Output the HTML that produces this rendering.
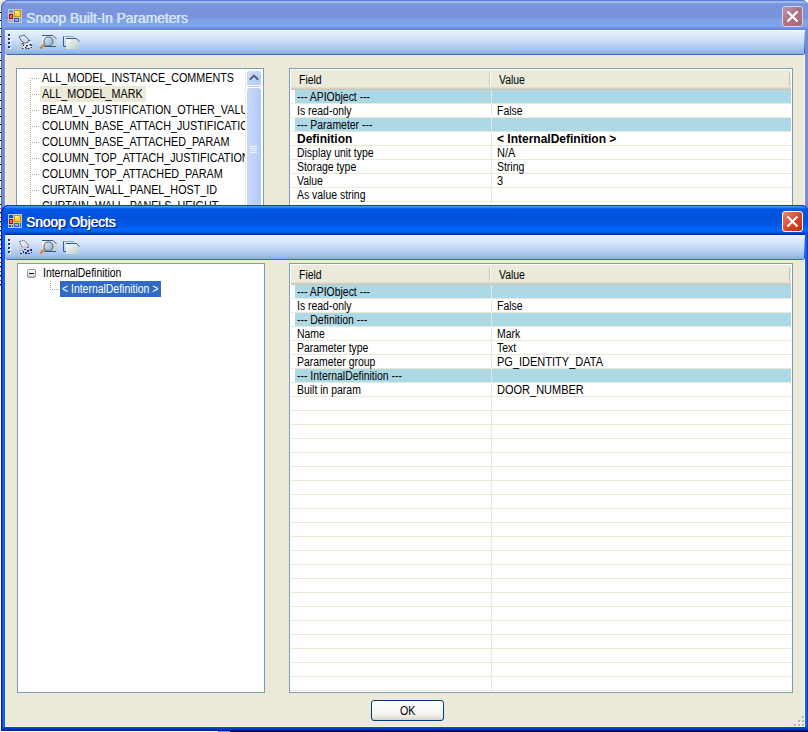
<!DOCTYPE html>
<html><head><meta charset="utf-8">
<style>
html,body{margin:0;padding:0;}
body{width:808px;height:732px;position:relative;overflow:hidden;background:#fff;font-family:"Liberation Sans",sans-serif;font-size:11px;color:#000;}
.a{position:absolute;}
.win{position:absolute;overflow:hidden;}
.client{position:absolute;background:#ece9d8;}
.tb{position:absolute;border-radius:0 0 3px 3px;}
.panel{position:absolute;background:#fff;border:1px solid #7f9db9;box-sizing:border-box;overflow:hidden;}
.hdr{position:absolute;left:1px;top:1px;height:20px;background:#ebeadb;}
.hdr .sh1{position:absolute;left:0;right:0;bottom:2px;height:1px;background:#e2dece;}
.hdr .sh2{position:absolute;left:0;right:0;bottom:1px;height:1px;background:#d6d2c2;}
.hdr .sh3{position:absolute;left:0;right:0;bottom:0;height:1px;background:#cbc7b8;}
.t{position:absolute;white-space:pre;line-height:13px;}
.row{position:absolute;height:13px;background:#add8e6;}
.gl{position:absolute;height:1px;background:#ebe8d8;}
.tree .t{line-height:16px;font-size:12px;transform:scaleX(0.898);transform-origin:0 0;margin-top:1px;}
.dotv{position:absolute;width:1px;background:repeating-linear-gradient(to bottom,#aca899 0 1px,transparent 1px 2px);}
.doth{position:absolute;height:1px;background:repeating-linear-gradient(to right,#aca899 0 1px,transparent 1px 2px);}
</style></head><body>

<!-- background strip at far left -->
<div class="a" style="left:0;top:0;width:1px;height:732px;background:#fff"></div>
<div class="a" style="left:0;top:0;width:8px;height:8px;background:#ece9d8"></div>
<div class="a" style="left:0;top:8px;width:1px;height:200px;background:repeating-linear-gradient(to bottom,transparent 0 4px,#000 4px 5px,transparent 5px 8px)"></div>
<div class="a" style="left:0;top:208px;width:1px;height:80px;background:repeating-linear-gradient(to bottom,#c04020 0 1px,transparent 1px 4px,#000 4px 5px,#40c0e0 5px 6px,transparent 6px 9px)"></div>

<!-- ============ BACK WINDOW (inactive) ============ -->
<div class="win" style="left:1px;top:0;width:808px;height:210px;background:#7a94dc;border-radius:8px 8px 0 0;">
  <!-- title gradient -->
  <div class="a" style="left:0;top:0;width:808px;height:30px;background:linear-gradient(to bottom,#5a7edc 0,#5a7edc 1px,#a0b8e8 1px,#a0b8e8 3px,#7a9ce4 3px,#7a94dc 5px,#7a94dc 18px,#7ca4e6 20px,#7ca4e6 27px,#6a88da 28px,#6a88da 30px);"></div>
  <!-- left/right frames -->
  <div class="a" style="left:0;top:28px;width:4px;height:190px;background:linear-gradient(to right,#5a6ed8 0 1px,#6f86dc 1px,#7890e0 4px);"></div>
  <div class="a" style="left:804px;top:28px;width:4px;height:190px;background:linear-gradient(to right,#7890e0 0,#6f86dc 3px,#5a6ed8 3px);"></div>
</div>
<div class="a" style="left:1px;top:0;width:808px;height:220px;border-left:1px solid #5468d4;border-top:1px solid #5a7edc;border-radius:8px 8px 0 0;box-sizing:border-box"></div>
<!-- back client -->
<div class="client" style="left:5px;top:30px;width:800px;height:180px;border-left:1px solid #fcf6e0;border-right:1px solid #fcf6e0;box-sizing:border-box"></div>
<!-- back toolbar -->
<div class="tb" style="left:5px;top:30px;width:800px;height:25px;background:linear-gradient(to bottom,#f0f7fe 0,#e3eefc 8%,#d6e6fb 30%,#c0d6f6 55%,#a4c2ee 80%,#8cb0e6 94%,#3d6bb8 96%);"></div>
<div class="a" style="left:804px;top:32px;width:1px;height:22px;border-radius:0 0 2px 0;background:linear-gradient(to bottom,#c0d8f8,#6a98e0 50%,#1c48a0)"></div>
<div class="a" style="left:804px;top:30px;width:1px;height:2px;background:#f4ecd0"></div>
<svg class="a" style="left:5px;top:30px" width="80" height="25">
<defs><linearGradient id="pgb" x1="0" y1="0" x2="1" y2="1"><stop offset="0" stop-color="#ffffff"/><stop offset="1" stop-color="#b4ccc8"/></linearGradient>
<linearGradient id="lnb" x1="0" y1="0" x2="1" y2="1"><stop offset="0" stop-color="#e4f2fc"/><stop offset="1" stop-color="#7aa8dc"/></linearGradient>
<linearGradient id="ppb" x1="0" y1="0" x2="1" y2="1"><stop offset="0" stop-color="#ffffff"/><stop offset="1" stop-color="#c8c8d0"/></linearGradient></defs>
<g fill="#fff"><rect x="4" y="5" width="2" height="2"/><rect x="4" y="9" width="2" height="2"/><rect x="4" y="13" width="2" height="2"/><rect x="4" y="17" width="2" height="2"/></g>
<g fill="#193a78"><rect x="3" y="4" width="2" height="2"/><rect x="3" y="8" width="2" height="2"/><rect x="3" y="12" width="2" height="2"/><rect x="3" y="16" width="2" height="2"/></g>
<!-- printer -->
<path d="M15 13 L18 12 L27 12 L27.5 19 L15 19 Z" fill="#e4eaf4"/>
<rect x="15" y="13" width="3" height="6" fill="#bccacc"/>
<path d="M14 6.5 L19 5 L23.5 9.2 L23 12.5 L19.5 13 L16.5 11 Z" fill="url(#pp{id})" stroke="#5a5a68" stroke-width="0.9"/>
<rect x="23" y="10" width="2.5" height="1" fill="#4a70c0"/>
<g fill="#14205e"><rect x="17" y="13" width="1.5" height="1.2"/><rect x="18" y="14.5" width="1.2" height="1.5"/><rect x="21" y="15" width="1.8" height="1.5"/><rect x="24.5" y="14" width="1.5" height="1.5"/><rect x="26" y="14.5" width="1.2" height="1.5"/><rect x="20" y="17" width="1.5" height="1.5"/><rect x="23" y="18" width="1.5" height="1"/><rect x="25.5" y="17" width="1.3" height="1.2"/><rect x="17" y="18" width="1.5" height="1"/><rect x="21" y="18.3" width="1.5" height="0.8"/></g>
<!-- magnifier page -->
<path d="M37 5 L48 5 L51.5 8.5 L51.5 17 L37 17 Z" fill="url(#pgb)"/>
<path d="M37 5.5 L48 5.5 L51.5 9 M39 16.5 L51 16.5" stroke="#2a5aa0" stroke-width="1" fill="none"/>
<path d="M39 14.5 L35.8 18" stroke="#d08430" stroke-width="2" stroke-linecap="round"/>
<circle cx="43.5" cy="11.5" r="4.5" fill="url(#lnb)" stroke="#6a6458" stroke-width="1.1"/>
<!-- copy -->
<path d="M58.5 6 L58.5 16.5 L61 16.5" stroke="#2a5aa0" stroke-width="1" fill="none"/>
<path d="M58.5 6.5 L69 6.5" stroke="#8aa8d0" stroke-width="1" fill="none"/>
<path d="M61 8 L71.5 8 L74 10.5 L74 19 L61 19 Z" fill="url(#pgb)"/>
<path d="M61 8.5 L71.5 8.5 L74.5 11.5" stroke="#2a5aa0" stroke-width="1" fill="none"/>
</svg>
<!-- back title icon -->
<svg class="a" style="left:8px;top:9px" width="14" height="14"><g fill="#c9c7bd"><rect x="0" y="0" width="14" height="1"/><rect x="0" y="13" width="14" height="1"/><rect x="0" y="0" width="1" height="14"/><rect x="13" y="0" width="1" height="14"/><rect x="5" y="0" width="1" height="14"/><rect x="1" y="4" width="4" height="1"/><rect x="1" y="10" width="4" height="1"/><rect x="6" y="8" width="7" height="1"/><rect x="11" y="9" width="1" height="4"/><rect x="3" y="10" width="1" height="3"/></g>
<rect x="6" y="1" width="7" height="7" fill="#c89400"/><rect x="7" y="2" width="5" height="5" fill="#ffd23c"/><rect x="7" y="2" width="3" height="2" fill="#fff0a8"/>
<rect x="1" y="5" width="4" height="5" fill="#a00c0c"/><rect x="2" y="6" width="2" height="3" fill="#f07070"/>
<rect x="6" y="9" width="5" height="4" fill="#2a5cc8"/><rect x="7" y="10" width="3" height="2" fill="#8cb4ff"/></svg>
<div class="t" style="left:26px;top:10px;font-size:14.5px;color:#d8e4f8;line-height:16px;transform:scaleX(0.95);transform-origin:0 0;text-shadow:0.6px 0 0 #d8e4f8">Snoop Built-In Parameters</div>
<!-- back close btn -->
<div class="a" style="left:782px;top:6px;width:21px;height:21px;border:1px solid #d0d8f0;border-radius:3px;box-sizing:border-box;background:linear-gradient(135deg,#bc96b0,#b07482 45%,#aa6672);"></div>
<svg class="a" style="left:782px;top:6px" width="21" height="21"><path d="M5.5 5.5 L15.5 15.5 M15.5 5.5 L5.5 15.5" stroke="#fff" stroke-width="2.2"/></svg>

<!-- back tree panel -->
<div class="panel tree" style="left:16px;top:68px;width:248px;height:160px;">
  <div class="dotv" style="left:13px;top:9px;height:150px"></div>
  <div class="doth" style="left:13px;top:9px;width:9px"></div>
  <div class="doth" style="left:13px;top:25px;width:9px"></div>
  <div class="doth" style="left:13px;top:41px;width:9px"></div>
  <div class="doth" style="left:13px;top:57px;width:9px"></div>
  <div class="doth" style="left:13px;top:73px;width:9px"></div>
  <div class="doth" style="left:13px;top:89px;width:9px"></div>
  <div class="doth" style="left:13px;top:105px;width:9px"></div>
  <div class="doth" style="left:13px;top:121px;width:9px"></div>
  <div class="doth" style="left:13px;top:137px;width:9px"></div>
  <div class="a" style="left:23px;top:17px;width:106px;height:16px;background:#ece9d8"></div>
  <div class="t" style="left:25px;top:0px">ALL_MODEL_INSTANCE_COMMENTS</div>
  <div class="t" style="left:25px;top:16px">ALL_MODEL_MARK</div>
  <div class="t" style="left:25px;top:32px">BEAM_V_JUSTIFICATION_OTHER_VALUE</div>
  <div class="t" style="left:25px;top:48px">COLUMN_BASE_ATTACH_JUSTIFICATION</div>
  <div class="t" style="left:25px;top:64px">COLUMN_BASE_ATTACHED_PARAM</div>
  <div class="t" style="left:25px;top:80px">COLUMN_TOP_ATTACH_JUSTIFICATION</div>
  <div class="t" style="left:25px;top:96px">COLUMN_TOP_ATTACHED_PARAM</div>
  <div class="t" style="left:25px;top:112px">CURTAIN_WALL_PANEL_HOST_ID</div>
  <div class="t" style="left:25px;top:128px">CURTAIN_WALL_PANELS_HEIGHT</div>
  <!-- scrollbar -->
  <div class="a" style="left:228px;top:0;width:17px;height:160px;background:#fdfdfa;border-left:1px solid #eeede5;box-sizing:border-box"></div>
  <div class="a" style="left:230px;top:2px;width:14px;height:14px;border-radius:3px;background:linear-gradient(135deg,#d0defd,#b6cbf8);box-shadow:0 0 0 1px #fff,0 1px 0 1px #b9c9e6"></div>
  <svg class="a" style="left:230px;top:2px" width="14" height="14"><path d="M2.8 8.8 L7 4.6 L11.2 8.8" stroke="#4d6185" stroke-width="2" fill="none"/></svg>
  <div class="a" style="left:230px;top:19px;width:14px;height:150px;border-radius:3px;background:linear-gradient(to right,#c9d9fc,#bcd1fb 60%,#b2c8f7);box-shadow:0 0 0 1px #fff"></div>
  <div class="a" style="left:233px;top:77px;width:7px;height:1px;background:#eef3fe;box-shadow:0 2px 0 #eef3fe,0 4px 0 #eef3fe,0 6px 0 #eef3fe"></div>
</div>

<!-- back list panel -->
<div class="panel" style="left:289px;top:68px;width:504px;height:160px;">
  <div class="hdr" style="width:500px"><div class="sh1"></div><div class="sh2"></div><div class="sh3"></div>
    <div class="a" style="left:198px;top:3px;width:1px;height:13px;background:#c7c5b2;border-right:1px solid #fff"></div>
    <div class="a" style="left:498px;top:3px;width:1px;height:13px;background:#c7c5b2;"></div>
  </div>
  <div class="t" style="left:9px;top:4px;font-size:12px;transform:scaleX(0.87);transform-origin:0 0;margin-top:1px">Field</div>
  <div class="t" style="left:209px;top:4px;font-size:12px;transform:scaleX(0.87);transform-origin:0 0;margin-top:1px">Value</div>
  <div class="gl" style="left:1px;top:34px;width:500px"></div>
<div class="gl" style="left:1px;top:48px;width:500px"></div>
<div class="gl" style="left:1px;top:62px;width:500px"></div>
<div class="gl" style="left:1px;top:76px;width:500px"></div>
<div class="gl" style="left:1px;top:90px;width:500px"></div>
<div class="gl" style="left:1px;top:104px;width:500px"></div>
<div class="gl" style="left:1px;top:118px;width:500px"></div>
<div class="gl" style="left:1px;top:132px;width:500px"></div>
<div class="gl" style="left:1px;top:146px;width:500px"></div>
<div class="a" style="left:201px;top:21px;width:1px;height:137px;background:#ebe8d8"></div>
<div class="row" style="left:5px;top:21px;width:196px"></div>
<div class="row" style="left:202px;top:21px;width:299px"></div>
<div class="t" style="left:7px;top:21px;font-size:12px;transform:scaleX(0.87);transform-origin:0 0;margin-top:1px;">--- APIObject ---</div>
<div class="t" style="left:7px;top:35px;font-size:12px;transform:scaleX(0.87);transform-origin:0 0;margin-top:1px;">Is read-only</div>
<div class="t" style="left:207px;top:35px;font-size:12px;transform:scaleX(0.87);transform-origin:0 0;margin-top:1px;">False</div>
<div class="row" style="left:5px;top:49px;width:196px"></div>
<div class="row" style="left:202px;top:49px;width:299px"></div>
<div class="t" style="left:7px;top:49px;font-size:12px;transform:scaleX(0.87);transform-origin:0 0;margin-top:1px;">--- Parameter ---</div>
<div class="t" style="left:7px;top:63px;font-weight:bold;font-size:12px;margin-top:1px;">Definition</div>
<div class="t" style="left:207px;top:63px;font-weight:bold;font-size:12px;margin-top:1px;">&lt; InternalDefinition &gt;</div>
<div class="t" style="left:7px;top:77px;font-size:12px;transform:scaleX(0.87);transform-origin:0 0;margin-top:1px;">Display unit type</div>
<div class="t" style="left:207px;top:77px;font-size:12px;transform:scaleX(0.917);transform-origin:0 0;margin-top:1px;">N/A</div>
<div class="t" style="left:7px;top:91px;font-size:12px;transform:scaleX(0.87);transform-origin:0 0;margin-top:1px;">Storage type</div>
<div class="t" style="left:207px;top:91px;font-size:12px;transform:scaleX(0.87);transform-origin:0 0;margin-top:1px;">String</div>
<div class="t" style="left:7px;top:105px;font-size:12px;transform:scaleX(0.87);transform-origin:0 0;margin-top:1px;">Value</div>
<div class="t" style="left:207px;top:105px;font-size:12px;transform:scaleX(0.917);transform-origin:0 0;margin-top:1px;">3</div>
<div class="t" style="left:7px;top:119px;font-size:12px;transform:scaleX(0.87);transform-origin:0 0;margin-top:1px;">As value string</div>
</div>

<!-- ============ FRONT WINDOW (active) ============ -->
<div class="win" style="left:1px;top:205px;width:808px;height:526px;background:#0831d9;border-radius:8px 8px 0 0;">
  <div class="a" style="left:0;top:0;width:808px;height:30px;background:linear-gradient(to bottom,#0a40d0 0 1px,#3a92ff 1px 2px,#2a82f8 2px 3px,#0a62f0 3px 4px,#0056e4 4px,#0050da 12px,#0054e0 17px,#005ae8 21px,#0066fe 23px,#0066fe 26px,#005ff4 26px 27px,#0050e0 27px 28px,#0040c8 28px 29px,#0030b0 29px 30px);"></div>
  <div class="a" style="left:0;top:28px;width:4px;height:498px;background:linear-gradient(to right,#0010c8 0,#0030e0 1px,#1868f8 2px,#0a5ae8 4px);"></div>
  <div class="a" style="left:804px;top:28px;width:4px;height:498px;background:linear-gradient(to right,#0a5ae8 0,#1868f8 1px,#0030e0 3px,#0010c8 4px);"></div>
  <div class="a" style="left:0;top:522px;width:808px;height:4px;background:linear-gradient(to bottom,#0048e8 0,#0038d0 2px,#001890 4px);"></div>
</div>
<div class="a" style="left:1px;top:205px;width:808px;height:526px;border-left:1px solid #0018c0;border-top:1px solid #0840d8;border-radius:8px 8px 0 0;box-sizing:border-box"></div>
<div class="client" style="left:5px;top:235px;width:800px;height:492px;border-left:1px solid #fcf6e0;border-right:1px solid #fcf6e0;border-bottom:1px solid #fcf6e0;box-sizing:border-box"></div>
<div class="tb" style="left:5px;top:235px;width:800px;height:25px;background:linear-gradient(to bottom,#f0f7fe 0,#e3eefc 8%,#d6e6fb 30%,#c0d6f6 55%,#a4c2ee 80%,#8cb0e6 94%,#3d6bb8 96%);"></div>
<div class="a" style="left:804px;top:237px;width:1px;height:22px;border-radius:0 0 2px 0;background:linear-gradient(to bottom,#c0d8f8,#6a98e0 50%,#1c48a0)"></div>
<div class="a" style="left:804px;top:235px;width:1px;height:2px;background:#f4ecd0"></div>
<svg class="a" style="left:5px;top:235px" width="80" height="25">
<defs><linearGradient id="pgf" x1="0" y1="0" x2="1" y2="1"><stop offset="0" stop-color="#ffffff"/><stop offset="1" stop-color="#b4ccc8"/></linearGradient>
<linearGradient id="lnf" x1="0" y1="0" x2="1" y2="1"><stop offset="0" stop-color="#e4f2fc"/><stop offset="1" stop-color="#7aa8dc"/></linearGradient>
<linearGradient id="ppf" x1="0" y1="0" x2="1" y2="1"><stop offset="0" stop-color="#ffffff"/><stop offset="1" stop-color="#c8c8d0"/></linearGradient></defs>
<g fill="#fff"><rect x="4" y="5" width="2" height="2"/><rect x="4" y="9" width="2" height="2"/><rect x="4" y="13" width="2" height="2"/><rect x="4" y="17" width="2" height="2"/></g>
<g fill="#193a78"><rect x="3" y="4" width="2" height="2"/><rect x="3" y="8" width="2" height="2"/><rect x="3" y="12" width="2" height="2"/><rect x="3" y="16" width="2" height="2"/></g>
<!-- printer -->
<path d="M14.5 6.5 L19 5.5 L23.5 9.5 L22.5 12.5 L17.5 13 Z" fill="url(#ppf)" stroke="#4a4a58" stroke-width="1" stroke-dasharray="1.5 1"/>
<path d="M15 13 L20 12 L27 14 L27 18 L15 18 Z" fill="#c8d0e0"/>
<path d="M15 13.5 L15 18.5" stroke="#b8c4c8" stroke-width="2"/>
<g fill="#1a2a70"><rect x="19" y="14" width="2" height="1"/><rect x="22" y="15" width="2" height="2"/><rect x="25" y="14" width="2" height="2"/><rect x="20" y="17" width="2" height="2"/><rect x="23" y="18" width="2" height="1"/><rect x="26" y="17" width="1" height="1"/><rect x="18" y="16" width="1" height="2"/><rect x="15" y="18" width="2" height="1"/></g>
<g fill="#5070c0"><rect x="17" y="15" width="1" height="1"/><rect x="22" y="12" width="2" height="1"/></g>
<!-- magnifier page -->
<path d="M37 5 L48 5 L51.5 8.5 L51.5 17 L37 17 Z" fill="url(#pgf)"/>
<path d="M37 5.5 L48 5.5 L51.5 9 M39 16.5 L51 16.5" stroke="#2a5aa0" stroke-width="1" fill="none"/>
<path d="M39 14.5 L35.8 18" stroke="#d08430" stroke-width="2" stroke-linecap="round"/>
<circle cx="43.5" cy="11.5" r="4.5" fill="url(#lnf)" stroke="#6a6458" stroke-width="1.1"/>
<!-- copy -->
<path d="M58.5 6 L58.5 16.5 L61 16.5" stroke="#2a5aa0" stroke-width="1" fill="none"/>
<path d="M58.5 6.5 L69 6.5" stroke="#8aa8d0" stroke-width="1" fill="none"/>
<path d="M61 8 L71.5 8 L74 10.5 L74 19 L61 19 Z" fill="url(#pgf)"/>
<path d="M61 8.5 L71.5 8.5 L74.5 11.5" stroke="#2a5aa0" stroke-width="1" fill="none"/>
</svg>
<svg class="a" style="left:8px;top:214px" width="14" height="14"><g fill="#c9c7bd"><rect x="0" y="0" width="14" height="1"/><rect x="0" y="13" width="14" height="1"/><rect x="0" y="0" width="1" height="14"/><rect x="13" y="0" width="1" height="14"/><rect x="5" y="0" width="1" height="14"/><rect x="1" y="4" width="4" height="1"/><rect x="1" y="10" width="4" height="1"/><rect x="6" y="8" width="7" height="1"/><rect x="11" y="9" width="1" height="4"/><rect x="3" y="10" width="1" height="3"/></g>
<rect x="6" y="1" width="7" height="7" fill="#c89400"/><rect x="7" y="2" width="5" height="5" fill="#ffd23c"/><rect x="7" y="2" width="3" height="2" fill="#fff0a8"/>
<rect x="1" y="5" width="4" height="5" fill="#a00c0c"/><rect x="2" y="6" width="2" height="3" fill="#f07070"/>
<rect x="6" y="9" width="5" height="4" fill="#2a5cc8"/><rect x="7" y="10" width="3" height="2" fill="#8cb4ff"/></svg>
<div class="t" style="left:27px;top:215px;font-size:14.5px;color:#0a1e8a;line-height:16px;transform:scaleX(0.94);transform-origin:0 0;text-shadow:0.6px 0 0 #0a1e8a">Snoop Objects</div>
<div class="t" style="left:26px;top:214px;font-size:14.5px;color:#fff;line-height:16px;transform:scaleX(0.94);transform-origin:0 0;text-shadow:0.6px 0 0 #fff">Snoop Objects</div>
<div class="a" style="left:782px;top:211px;width:21px;height:21px;border:1px solid #fff;border-radius:3px;box-sizing:border-box;background:linear-gradient(135deg,#e88870,#d84020 60%,#c03010);"></div>
<svg class="a" style="left:782px;top:211px" width="21" height="21"><path d="M5.5 5.5 L15.5 15.5 M15.5 5.5 L5.5 15.5" stroke="#fff" stroke-width="2.2"/></svg>

<!-- front tree panel -->
<div class="panel tree" style="left:17px;top:263px;width:248px;height:430px;">
  <div class="a" style="left:9px;top:5px;width:9px;height:9px;border:1px solid #7a95b8;border-radius:2px;box-sizing:border-box;background:linear-gradient(to bottom,#fff,#e8e4d8 70%,#c8c0a8)"></div>
  <div class="a" style="left:11px;top:9px;width:5px;height:1px;background:#000"></div>
  <div class="dotv" style="left:32px;top:17px;height:9px"></div>
  <div class="doth" style="left:32px;top:25px;width:10px"></div>
  <div class="t" style="left:25px;top:0px;transform:scaleX(0.87)">InternalDefinition</div>
  <div class="a" style="left:42px;top:17px;width:101px;height:16px;background:#316ac5"></div>
  <div class="t" style="left:44px;top:16px;color:#fff;transform:scaleX(0.87)">&lt; InternalDefinition &gt;</div>
</div>

<!-- front list panel -->
<div class="panel" style="left:289px;top:263px;width:504px;height:430px;">
  <div class="hdr" style="width:500px"><div class="sh1"></div><div class="sh2"></div><div class="sh3"></div>
    <div class="a" style="left:198px;top:3px;width:1px;height:13px;background:#c7c5b2;border-right:1px solid #fff"></div>
    <div class="a" style="left:498px;top:3px;width:1px;height:13px;background:#c7c5b2;"></div>
  </div>
  <div class="t" style="left:9px;top:4px;font-size:12px;transform:scaleX(0.87);transform-origin:0 0;margin-top:1px">Field</div>
  <div class="t" style="left:209px;top:4px;font-size:12px;transform:scaleX(0.87);transform-origin:0 0;margin-top:1px">Value</div>
  <div class="gl" style="left:1px;top:34px;width:500px"></div>
<div class="gl" style="left:1px;top:48px;width:500px"></div>
<div class="gl" style="left:1px;top:62px;width:500px"></div>
<div class="gl" style="left:1px;top:76px;width:500px"></div>
<div class="gl" style="left:1px;top:90px;width:500px"></div>
<div class="gl" style="left:1px;top:104px;width:500px"></div>
<div class="gl" style="left:1px;top:118px;width:500px"></div>
<div class="gl" style="left:1px;top:132px;width:500px"></div>
<div class="gl" style="left:1px;top:146px;width:500px"></div>
<div class="gl" style="left:1px;top:160px;width:500px"></div>
<div class="gl" style="left:1px;top:174px;width:500px"></div>
<div class="gl" style="left:1px;top:188px;width:500px"></div>
<div class="gl" style="left:1px;top:202px;width:500px"></div>
<div class="gl" style="left:1px;top:216px;width:500px"></div>
<div class="gl" style="left:1px;top:230px;width:500px"></div>
<div class="gl" style="left:1px;top:244px;width:500px"></div>
<div class="gl" style="left:1px;top:258px;width:500px"></div>
<div class="gl" style="left:1px;top:272px;width:500px"></div>
<div class="gl" style="left:1px;top:286px;width:500px"></div>
<div class="gl" style="left:1px;top:300px;width:500px"></div>
<div class="gl" style="left:1px;top:314px;width:500px"></div>
<div class="gl" style="left:1px;top:328px;width:500px"></div>
<div class="gl" style="left:1px;top:342px;width:500px"></div>
<div class="gl" style="left:1px;top:356px;width:500px"></div>
<div class="gl" style="left:1px;top:370px;width:500px"></div>
<div class="gl" style="left:1px;top:384px;width:500px"></div>
<div class="gl" style="left:1px;top:398px;width:500px"></div>
<div class="gl" style="left:1px;top:412px;width:500px"></div>
<div class="gl" style="left:1px;top:426px;width:500px"></div>
<div class="a" style="left:201px;top:21px;width:1px;height:407px;background:#ebe8d8"></div>
<div class="row" style="left:5px;top:21px;width:196px"></div>
<div class="row" style="left:202px;top:21px;width:299px"></div>
<div class="t" style="left:7px;top:21px;font-size:12px;transform:scaleX(0.87);transform-origin:0 0;margin-top:1px;">--- APIObject ---</div>
<div class="t" style="left:7px;top:35px;font-size:12px;transform:scaleX(0.87);transform-origin:0 0;margin-top:1px;">Is read-only</div>
<div class="t" style="left:207px;top:35px;font-size:12px;transform:scaleX(0.87);transform-origin:0 0;margin-top:1px;">False</div>
<div class="row" style="left:5px;top:49px;width:196px"></div>
<div class="row" style="left:202px;top:49px;width:299px"></div>
<div class="t" style="left:7px;top:49px;font-size:12px;transform:scaleX(0.87);transform-origin:0 0;margin-top:1px;">--- Definition ---</div>
<div class="t" style="left:7px;top:63px;font-size:12px;transform:scaleX(0.87);transform-origin:0 0;margin-top:1px;">Name</div>
<div class="t" style="left:207px;top:63px;font-size:12px;transform:scaleX(0.87);transform-origin:0 0;margin-top:1px;">Mark</div>
<div class="t" style="left:7px;top:77px;font-size:12px;transform:scaleX(0.87);transform-origin:0 0;margin-top:1px;">Parameter type</div>
<div class="t" style="left:207px;top:77px;font-size:12px;transform:scaleX(0.87);transform-origin:0 0;margin-top:1px;">Text</div>
<div class="t" style="left:7px;top:91px;font-size:12px;transform:scaleX(0.87);transform-origin:0 0;margin-top:1px;">Parameter group</div>
<div class="t" style="left:207px;top:91px;font-size:12px;transform:scaleX(0.917);transform-origin:0 0;margin-top:1px;">PG_IDENTITY_DATA</div>
<div class="row" style="left:5px;top:105px;width:196px"></div>
<div class="row" style="left:202px;top:105px;width:299px"></div>
<div class="t" style="left:7px;top:105px;font-size:12px;transform:scaleX(0.87);transform-origin:0 0;margin-top:1px;">--- InternalDefinition ---</div>
<div class="t" style="left:7px;top:119px;font-size:12px;transform:scaleX(0.87);transform-origin:0 0;margin-top:1px;">Built in param</div>
<div class="t" style="left:207px;top:119px;font-size:12px;transform:scaleX(0.917);transform-origin:0 0;margin-top:1px;">DOOR_NUMBER</div>
</div>

<!-- OK button -->
<div class="a" style="left:371px;top:700px;width:73px;height:21px;border:1px solid #003c74;border-radius:3px;box-sizing:border-box;background:linear-gradient(to bottom,#fff,#f4f3ee 70%,#e3e1d6 90%,#d6d0c5);"></div>
<div class="t" style="left:400px;top:704px;font-size:12px;transform:scaleX(0.89);transform-origin:0 0;margin-top:1px">OK</div>

<!-- resize grip -->
<div class="a" style="left:802px;top:716px;width:2px;height:2px;background:#b9b5a5;box-shadow:1px 1px 0 #fff"></div>
<div class="a" style="left:798px;top:720px;width:2px;height:2px;background:#b9b5a5;box-shadow:1px 1px 0 #fff"></div>
<div class="a" style="left:802px;top:720px;width:2px;height:2px;background:#b9b5a5;box-shadow:1px 1px 0 #fff"></div>
<div class="a" style="left:794px;top:724px;width:2px;height:2px;background:#b9b5a5;box-shadow:1px 1px 0 #fff"></div>
<div class="a" style="left:798px;top:724px;width:2px;height:2px;background:#b9b5a5;box-shadow:1px 1px 0 #fff"></div>
<div class="a" style="left:802px;top:724px;width:2px;height:2px;background:#b9b5a5;box-shadow:1px 1px 0 #fff"></div>
<div class="a" style="left:0;top:731px;width:218px;height:1px;background:#fff"></div>
<div class="a" style="left:218px;top:731px;width:12px;height:1px;background:#8090b0"></div>
<div class="a" style="left:230px;top:731px;width:578px;height:1px;background:#000"></div>

</body></html>
